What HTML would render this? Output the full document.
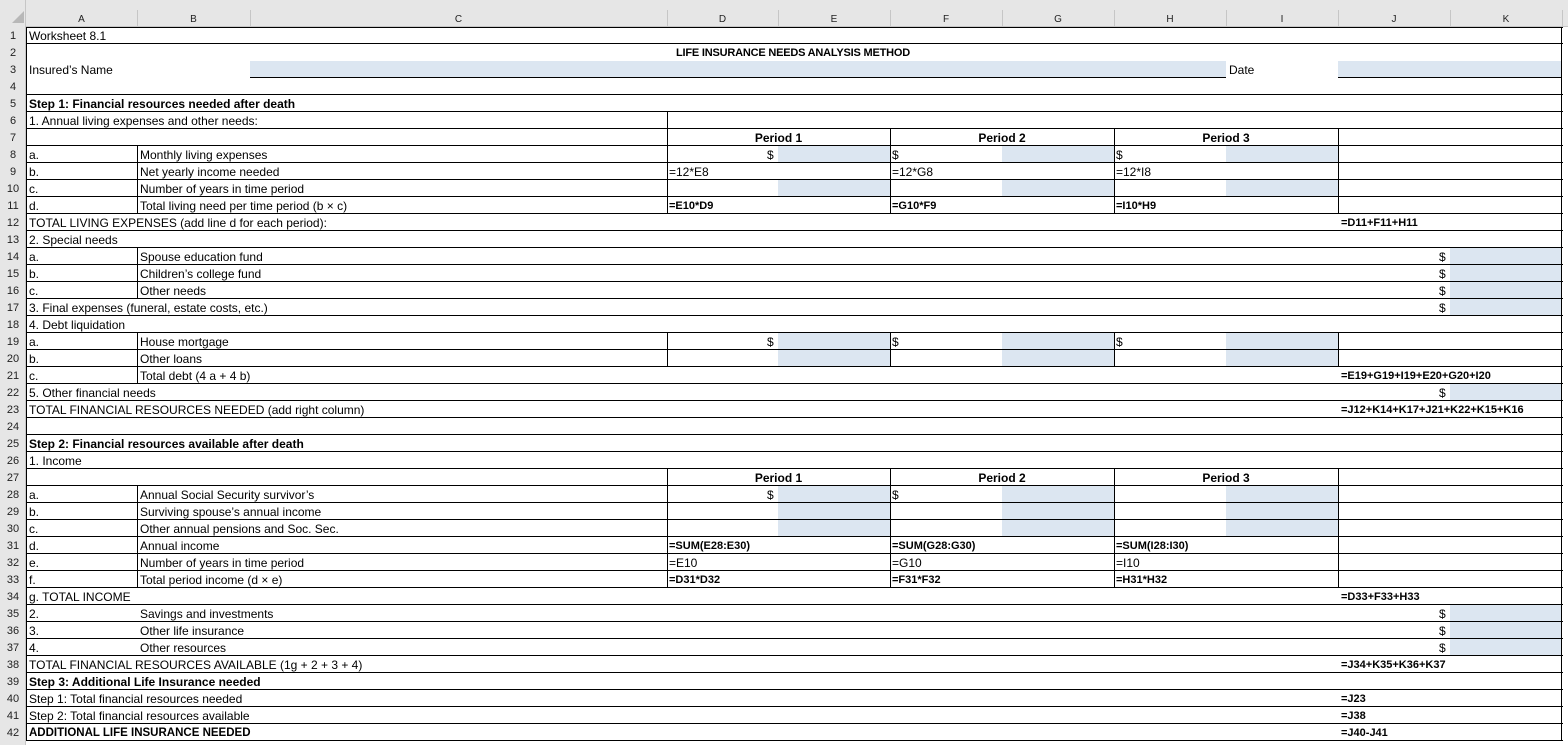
<!DOCTYPE html>
<html><head><meta charset="utf-8"><style>
*{margin:0;padding:0;box-sizing:border-box}
body{width:1568px;height:745px;position:relative;background:#fff;font-family:"Liberation Sans",Arial,sans-serif;font-size:12px;color:#000;overflow:hidden}
div{position:absolute}
.t{height:17px;line-height:19px;white-space:nowrap}
.b{font-weight:bold}
.f{font-weight:bold;font-size:11px}
.g{font-size:12px}
.h{height:1px;background:#000;left:26px;width:1537px}
.v{width:1px;background:#000}
.s{background:#dce6f1;height:17px}
.rn{left:0;width:26px;text-align:center;height:17px;line-height:19px;color:#222;font-size:11px}
.cl{top:12px;height:15px;line-height:15px;text-align:center;font-size:10px;color:#222}
.cs{top:10px;height:17px;width:1px;background:#c6c6c6}
</style></head><body>
<div style="left:0;top:0;width:1568px;height:27px;background:#e6e6e6;border-bottom:1px solid #c6c6c6"></div>
<div style="left:0;top:0;width:26px;height:745px;background:#e6e6e6;border-right:1px solid #c6c6c6"></div>
<div style="left:12px;top:11px;width:0;height:0;border-left:12px solid transparent;border-bottom:12px solid #b8b8b8"></div>
<div class="cl" style="left:26px;width:111px">A</div><div class="cs" style="left:137px"></div>
<div class="cl" style="left:137px;width:113px">B</div><div class="cs" style="left:250px"></div>
<div class="cl" style="left:250px;width:417px">C</div><div class="cs" style="left:667px"></div>
<div class="cl" style="left:667px;width:111px">D</div><div class="cs" style="left:778px"></div>
<div class="cl" style="left:778px;width:112px">E</div><div class="cs" style="left:890px"></div>
<div class="cl" style="left:890px;width:112px">F</div><div class="cs" style="left:1002px"></div>
<div class="cl" style="left:1002px;width:112px">G</div><div class="cs" style="left:1114px"></div>
<div class="cl" style="left:1114px;width:112px">H</div><div class="cs" style="left:1226px"></div>
<div class="cl" style="left:1226px;width:112px">I</div><div class="cs" style="left:1338px"></div>
<div class="cl" style="left:1338px;width:112px">J</div><div class="cs" style="left:1450px"></div>
<div class="cl" style="left:1450px;width:112px">K</div><div class="cs" style="left:1562px"></div>
<div class="rn" style="top:27px">1</div><div class="rn" style="top:44px">2</div><div class="rn" style="top:61px">3</div><div class="rn" style="top:78px">4</div><div class="rn" style="top:95px">5</div><div class="rn" style="top:112px">6</div><div class="rn" style="top:129px">7</div><div class="rn" style="top:146px">8</div><div class="rn" style="top:163px">9</div><div class="rn" style="top:180px">10</div><div class="rn" style="top:197px">11</div><div class="rn" style="top:214px">12</div><div class="rn" style="top:231px">13</div><div class="rn" style="top:248px">14</div><div class="rn" style="top:265px">15</div><div class="rn" style="top:282px">16</div><div class="rn" style="top:299px">17</div><div class="rn" style="top:316px">18</div><div class="rn" style="top:333px">19</div><div class="rn" style="top:350px">20</div><div class="rn" style="top:367px">21</div><div class="rn" style="top:384px">22</div><div class="rn" style="top:401px">23</div><div class="rn" style="top:418px">24</div><div class="rn" style="top:435px">25</div><div class="rn" style="top:452px">26</div><div class="rn" style="top:469px">27</div><div class="rn" style="top:486px">28</div><div class="rn" style="top:503px">29</div><div class="rn" style="top:520px">30</div><div class="rn" style="top:537px">31</div><div class="rn" style="top:554px">32</div><div class="rn" style="top:571px">33</div><div class="rn" style="top:588px">34</div><div class="rn" style="top:605px">35</div><div class="rn" style="top:622px">36</div><div class="rn" style="top:639px">37</div><div class="rn" style="top:656px">38</div><div class="rn" style="top:673px">39</div><div class="rn" style="top:690px">40</div><div class="rn" style="top:707px">41</div><div class="rn" style="top:724px">42</div>
<div class="s" style="left:250px;top:61px;width:976px"></div>
<div class="s" style="left:1338px;top:61px;width:224px"></div>
<div class="s" style="left:778px;top:146px;width:112px"></div><div class="s" style="left:1002px;top:146px;width:112px"></div><div class="s" style="left:1226px;top:146px;width:112px"></div>
<div class="s" style="left:778px;top:180px;width:112px"></div><div class="s" style="left:1002px;top:180px;width:112px"></div><div class="s" style="left:1226px;top:180px;width:112px"></div>
<div class="s" style="left:778px;top:333px;width:112px;height:34px"></div><div class="s" style="left:1002px;top:333px;width:112px;height:34px"></div><div class="s" style="left:1226px;top:333px;width:112px;height:34px"></div>
<div class="s" style="left:778px;top:486px;width:112px;height:51px"></div><div class="s" style="left:1002px;top:486px;width:112px;height:51px"></div><div class="s" style="left:1226px;top:486px;width:112px;height:51px"></div>
<div class="s" style="left:1450px;top:248px;width:112px;height:68px"></div>
<div class="s" style="left:1450px;top:384px;width:112px"></div>
<div class="s" style="left:1450px;top:605px;width:112px;height:51px"></div>
<div class="h" style="top:27px"></div><div class="h" style="top:43px"></div>
<div style="left:250px;top:77px;width:976px;height:1px;background:#000"></div>
<div style="left:1338px;top:77px;width:224px;height:1px;background:#000"></div>
<div class="h" style="top:94px"></div><div class="h" style="top:111px"></div><div class="h" style="top:128px"></div><div class="h" style="top:145px"></div><div class="h" style="top:162px"></div><div class="h" style="top:179px"></div><div class="h" style="top:196px"></div><div class="h" style="top:213px"></div><div class="h" style="top:230px"></div><div class="h" style="top:247px"></div><div class="h" style="top:264px"></div><div class="h" style="top:281px"></div><div class="h" style="top:298px"></div><div class="h" style="top:315px"></div><div class="h" style="top:332px"></div><div class="h" style="top:349px"></div><div class="h" style="top:366px"></div><div class="h" style="top:383px"></div><div class="h" style="top:400px"></div><div class="h" style="top:417px"></div><div class="h" style="top:434px"></div><div class="h" style="top:451px"></div><div class="h" style="top:468px"></div><div class="h" style="top:485px"></div><div class="h" style="top:502px"></div><div class="h" style="top:519px"></div><div class="h" style="top:536px"></div><div class="h" style="top:553px"></div><div class="h" style="top:570px"></div><div class="h" style="top:587px"></div><div class="h" style="top:604px"></div><div class="h" style="top:621px"></div><div class="h" style="top:638px"></div><div class="h" style="top:655px"></div><div class="h" style="top:672px"></div><div class="h" style="top:689px"></div><div class="h" style="top:706px"></div><div class="h" style="top:723px"></div><div class="h" style="top:740px"></div>
<div class="v" style="left:26px;top:27px;height:714px"></div>
<div class="v" style="left:1561px;top:27px;height:714px"></div>
<div class="v" style="left:137px;top:146px;height:68px"></div>
<div class="v" style="left:137px;top:248px;height:51px"></div>
<div class="v" style="left:137px;top:333px;height:51px"></div>
<div class="v" style="left:137px;top:486px;height:102px"></div>
<div class="v" style="left:667px;top:112px;height:102px"></div>
<div class="v" style="left:890px;top:129px;height:85px"></div>
<div class="v" style="left:1114px;top:129px;height:85px"></div>
<div class="v" style="left:1338px;top:129px;height:85px"></div>
<div class="v" style="left:667px;top:333px;height:34px"></div>
<div class="v" style="left:890px;top:333px;height:34px"></div>
<div class="v" style="left:1114px;top:333px;height:34px"></div>
<div class="v" style="left:1338px;top:333px;height:34px"></div>
<div class="v" style="left:667px;top:469px;height:119px"></div>
<div class="v" style="left:890px;top:469px;height:119px"></div>
<div class="v" style="left:1114px;top:469px;height:119px"></div>
<div class="v" style="left:1338px;top:469px;height:119px"></div>
<div class="t" style="left:29px;top:27px">Worksheet 8.1</div>
<div class="t f" style="left:667px;top:44px;width:252px;text-align:center;letter-spacing:-0.2px">LIFE INSURANCE NEEDS ANALYSIS METHOD</div>
<div class="t" style="left:29px;top:61px">Insured’s Name</div>
<div class="t" style="left:1229px;top:61px">Date</div>
<div class="t b" style="left:29px;top:95px">Step 1: Financial resources needed after death</div>
<div class="t" style="left:29px;top:112px">1. Annual living expenses and other needs:</div>
<div class="t b" style="left:667px;top:129px;width:223px;text-align:center">Period 1</div>
<div class="t b" style="left:890px;top:129px;width:224px;text-align:center">Period 2</div>
<div class="t b" style="left:1114px;top:129px;width:224px;text-align:center">Period 3</div>
<div class="t" style="left:29px;top:146px">a.</div><div class="t" style="left:140px;top:146px">Monthly living expenses</div>
<div class="t" style="left:767px;top:146px">$</div><div class="t" style="left:892px;top:146px">$</div><div class="t" style="left:1116px;top:146px">$</div>
<div class="t" style="left:29px;top:163px">b.</div><div class="t" style="left:140px;top:163px">Net yearly income needed</div>
<div class="t g" style="left:669px;top:163px">=12*E8</div><div class="t g" style="left:892px;top:163px">=12*G8</div><div class="t g" style="left:1116px;top:163px">=12*I8</div>
<div class="t" style="left:29px;top:180px">c.</div><div class="t" style="left:140px;top:180px">Number of years in time period</div>
<div class="t" style="left:29px;top:197px">d.</div><div class="t" style="left:140px;top:197px">Total living need per time period (b × c)</div>
<div class="t f" style="left:669px;top:197px">=E10*D9</div><div class="t f" style="left:892px;top:197px">=G10*F9</div><div class="t f" style="left:1116px;top:197px">=I10*H9</div>
<div class="t g" style="left:29px;top:214px">TOTAL LIVING EXPENSES (add line d for each period):</div>
<div class="t f" style="left:1341px;top:214px">=D11+F11+H11</div>
<div class="t" style="left:29px;top:231px">2. Special needs</div>
<div class="t" style="left:29px;top:248px">a.</div><div class="t" style="left:140px;top:248px">Spouse education fund</div><div class="t" style="left:1439px;top:248px">$</div>
<div class="t" style="left:29px;top:265px">b.</div><div class="t" style="left:140px;top:265px">Children’s college fund</div><div class="t" style="left:1439px;top:265px">$</div>
<div class="t" style="left:29px;top:282px">c.</div><div class="t" style="left:140px;top:282px">Other needs</div><div class="t" style="left:1439px;top:282px">$</div>
<div class="t" style="left:29px;top:299px">3. Final expenses (funeral, estate costs, etc.)</div><div class="t" style="left:1439px;top:299px">$</div>
<div class="t" style="left:29px;top:316px">4. Debt liquidation</div>
<div class="t" style="left:29px;top:333px">a.</div><div class="t" style="left:140px;top:333px">House mortgage</div>
<div class="t" style="left:767px;top:333px">$</div><div class="t" style="left:892px;top:333px">$</div><div class="t" style="left:1116px;top:333px">$</div>
<div class="t" style="left:29px;top:350px">b.</div><div class="t" style="left:140px;top:350px">Other loans</div>
<div class="t" style="left:29px;top:367px">c.</div><div class="t" style="left:140px;top:367px">Total debt (4 a + 4 b)</div>
<div class="t f" style="left:1341px;top:367px">=E19+G19+I19+E20+G20+I20</div>
<div class="t" style="left:29px;top:384px">5. Other financial needs</div><div class="t" style="left:1439px;top:384px">$</div>
<div class="t g" style="left:29px;top:401px">TOTAL FINANCIAL RESOURCES NEEDED (add right column)</div>
<div class="t f" style="left:1341px;top:401px">=J12+K14+K17+J21+K22+K15+K16</div>
<div class="t b" style="left:29px;top:435px">Step 2: Financial resources available after death</div>
<div class="t" style="left:29px;top:452px">1. Income</div>
<div class="t b" style="left:667px;top:469px;width:223px;text-align:center">Period 1</div>
<div class="t b" style="left:890px;top:469px;width:224px;text-align:center">Period 2</div>
<div class="t b" style="left:1114px;top:469px;width:224px;text-align:center">Period 3</div>
<div class="t" style="left:29px;top:486px">a.</div><div class="t" style="left:140px;top:486px">Annual Social Security survivor’s</div>
<div class="t" style="left:767px;top:486px">$</div><div class="t" style="left:892px;top:486px">$</div>
<div class="t" style="left:29px;top:503px">b.</div><div class="t" style="left:140px;top:503px">Surviving spouse’s annual income</div>
<div class="t" style="left:29px;top:520px">c.</div><div class="t" style="left:140px;top:520px">Other annual pensions and Soc. Sec.</div>
<div class="t" style="left:29px;top:537px">d.</div><div class="t" style="left:140px;top:537px">Annual income</div>
<div class="t f" style="left:669px;top:537px">=SUM(E28:E30)</div><div class="t f" style="left:892px;top:537px">=SUM(G28:G30)</div><div class="t f" style="left:1116px;top:537px">=SUM(I28:I30)</div>
<div class="t" style="left:29px;top:554px">e.</div><div class="t" style="left:140px;top:554px">Number of years in time period</div>
<div class="t g" style="left:669px;top:554px">=E10</div><div class="t g" style="left:892px;top:554px">=G10</div><div class="t g" style="left:1116px;top:554px">=I10</div>
<div class="t" style="left:29px;top:571px">f.</div><div class="t" style="left:140px;top:571px">Total period income (d × e)</div>
<div class="t f" style="left:669px;top:571px">=D31*D32</div><div class="t f" style="left:892px;top:571px">=F31*F32</div><div class="t f" style="left:1116px;top:571px">=H31*H32</div>
<div class="t g" style="left:29px;top:588px">g. TOTAL INCOME</div>
<div class="t f" style="left:1341px;top:588px">=D33+F33+H33</div>
<div class="t" style="left:29px;top:605px">2.</div><div class="t" style="left:140px;top:605px">Savings and investments</div><div class="t" style="left:1439px;top:605px">$</div>
<div class="t" style="left:29px;top:622px">3.</div><div class="t" style="left:140px;top:622px">Other life insurance</div><div class="t" style="left:1439px;top:622px">$</div>
<div class="t" style="left:29px;top:639px">4.</div><div class="t" style="left:140px;top:639px">Other resources</div><div class="t" style="left:1439px;top:639px">$</div>
<div class="t g" style="left:29px;top:656px">TOTAL FINANCIAL RESOURCES AVAILABLE (1g + 2 + 3 + 4)</div>
<div class="t f" style="left:1341px;top:656px">=J34+K35+K36+K37</div>
<div class="t b" style="left:29px;top:673px">Step 3: Additional Life Insurance needed</div>
<div class="t" style="left:29px;top:690px">Step 1: Total financial resources needed</div><div class="t f" style="left:1341px;top:690px">=J23</div>
<div class="t" style="left:29px;top:707px">Step 2: Total financial resources available</div><div class="t f" style="left:1341px;top:707px">=J38</div>
<div class="t f" style="left:29px;top:724px;font-size:11.5px">ADDITIONAL LIFE INSURANCE NEEDED</div><div class="t f" style="left:1341px;top:724px">=J40-J41</div>
</body></html>
